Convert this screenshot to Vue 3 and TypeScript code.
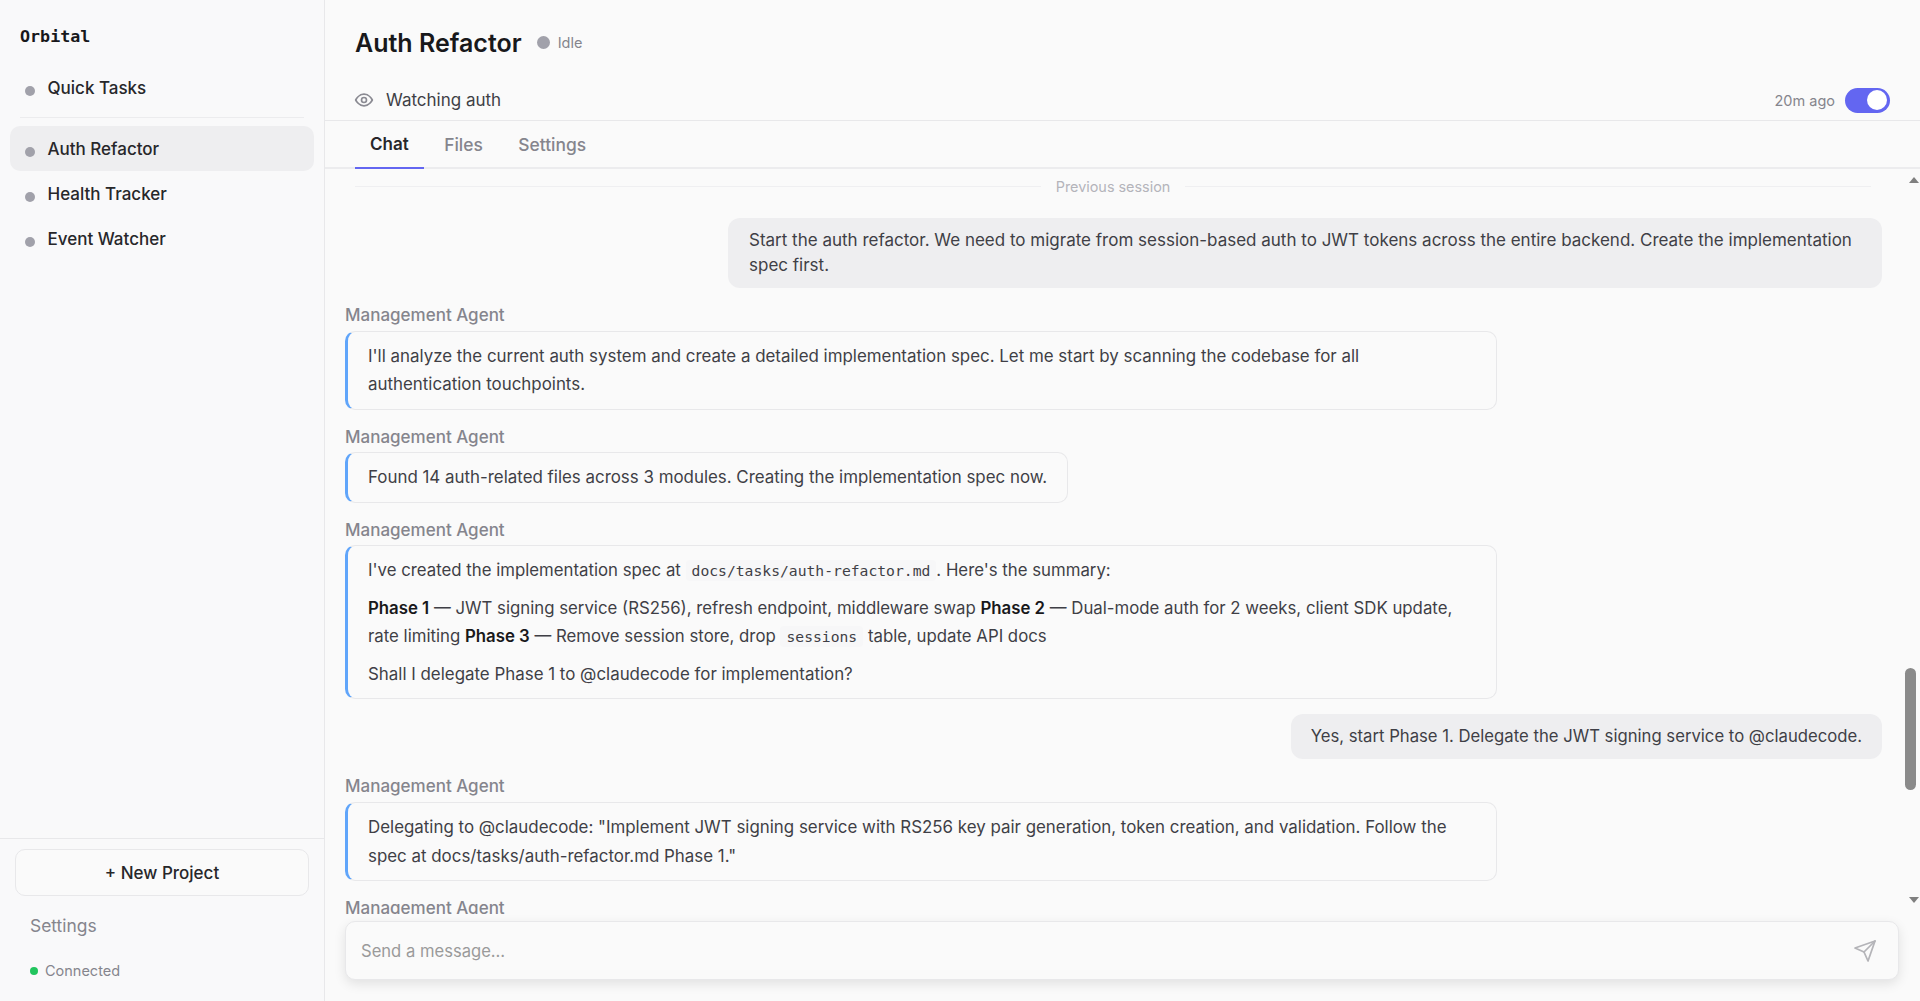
<script setup lang="ts">
interface Project { name: string; active?: boolean }
const projects: Project[] = [
  { name: 'Auth Refactor', active: true },
  { name: 'Health Tracker' },
  { name: 'Event Watcher' },
]
const tabs = ['Chat', 'Files', 'Settings']
</script>

<template>
  <div class="app">
    <aside class="sidebar">
      <div class="logo">Orbital</div>
      <div class="quick">
        <div class="item"><span class="dot"></span><span>Quick Tasks</span></div>
      </div>
      <div class="projects">
        <div v-for="p in projects" :key="p.name" class="item" :class="{ active: p.active }">
          <span class="dot"></span><span>{{ p.name }}</span>
        </div>
      </div>
      <div class="side-foot">
        <button class="new-btn">+ New Project</button>
        <div class="side-settings">Settings</div>
        <div class="conn"><span class="conn-dot"></span>Connected</div>
      </div>
    </aside>

    <main class="main">
      <header class="head">
        <div class="title-row">
          <h1>Auth Refactor</h1>
          <span class="status-dot"></span>
          <span class="status">Idle</span>
        </div>
        <div class="watch-row">
          <svg class="eye" viewBox="0 0 24 24" width="20" height="20" fill="none" stroke="#8a8a92" stroke-width="2" stroke-linecap="round" stroke-linejoin="round">
            <path d="M2 12s3.6-7 10-7 10 7 10 7-3.6 7-10 7-10-7-10-7z" />
            <circle cx="12" cy="12" r="3" />
          </svg>
          <span class="watch">Watching auth</span>
          <span class="ago">20m ago</span>
          <span class="toggle"><span class="knob"></span></span>
        </div>
      </header>

      <nav class="tabs">
        <div v-for="(t, i) in tabs" :key="t" class="tab" :class="{ on: i === 0 }">{{ t }}</div>
      </nav>

      <section class="chat">
        <div class="scroll">
          <div class="sep"><span>Previous session</span></div>

          <div class="user first"><div class="ubub">Start the auth refactor. We need to migrate from session-based auth to JWT tokens across the entire backend. Create the implementation spec first.</div></div>

          <div class="agent">
            <div class="who">Management Agent</div>
            <div class="abub">I'll analyze the current auth system and create a detailed implementation spec. Let me start by scanning the codebase for all authentication touchpoints.</div>
          </div>

          <div class="agent">
            <div class="who">Management Agent</div>
            <div class="abub">Found 14 auth-related files across 3 modules. Creating the implementation spec now.</div>
          </div>

          <div class="agent">
            <div class="who">Management Agent</div>
            <div class="abub">
              <p class="tight">I've created the implementation spec at <code>docs/tasks/auth-refactor.md</code>. Here's the summary:</p>
              <p class="tight"><strong>Phase 1</strong> — JWT signing service (RS256), refresh endpoint, middleware swap <strong>Phase 2</strong> — Dual-mode auth for 2 weeks, client SDK update, rate limiting <strong>Phase 3</strong> — Remove session store, drop <code>sessions</code> table, update API docs</p>
              <p>Shall I delegate Phase 1 to @claudecode for implementation?</p>
            </div>
          </div>

          <div class="user"><div class="ubub short">Yes, start Phase 1. Delegate the JWT signing service to @claudecode.</div></div>

          <div class="agent">
            <div class="who">Management Agent</div>
            <div class="abub">Delegating to @claudecode: "Implement JWT signing service with RS256 key pair generation, token creation, and validation. Follow the spec at docs/tasks/auth-refactor.md Phase 1."</div>
          </div>

          <div class="agent">
            <div class="who">Management Agent</div>
          </div>
        </div>

        <div class="bar">
          <span class="arrow up"></span>
          <span class="thumb"></span>
          <span class="arrow down"></span>
        </div>
      </section>

      <div class="composer-wrap">
        <div class="composer">
          <span class="ph">Send a message…</span>
          <svg viewBox="0 0 24 24" width="24" height="24" fill="none" stroke="#b4b4b8" stroke-width="1.75" stroke-linecap="round" stroke-linejoin="round">
            <path d="M22 2 15 22l-4-9-9-4z" />
            <path d="M22 2 11 13" />
          </svg>
        </div>
      </div>
    </main>
  </div>
</template>

<style>
html, body { margin: 0; background: #fafafa; }
</style>

<style scoped>
* { box-sizing: border-box; }
.app {
  display: flex;
  height: 1001px;
  overflow: hidden;
  font-family: Inter, "Noto Sans", sans-serif;
  color: #27272a;
  background: #fafafa;
  font-size: 16.9px;
}
.sidebar {
  width: 325px;
  flex: none;
  display: flex;
  flex-direction: column;
  background: #f9f9fa;
  border-right: 1px solid #e8e8ea;
  padding: 0 10px;
}
.logo {
  font-family: "DejaVu Sans Mono", monospace;
  font-weight: 700;
  font-size: 16.7px;
  color: #18181b;
  padding: 26px 10px 0;
  height: 65px;
}
.quick {
  padding-bottom: 7px;
  border-bottom: 1px solid #ececee;
  margin: 0 10px 8px;
}
.quick .item { margin: 0 -10px; }
.item {
  display: flex;
  align-items: center;
  gap: 12.5px;
  height: 45px;
  padding: 0 15px;
  border-radius: 10px;
  font-weight: 500;
  font-size: 17px;
  color: #27272a;
}
.item.active { background: #eeeef0; }
.dot {
  width: 10px;
  height: 10px;
  border-radius: 50%;
  background: #a1a1aa;
  margin-top: 6px;
}
.side-foot {
  margin: auto -10px 0;
  border-top: 1px solid #e8e8ea;
  padding: 10px 15px 21px;
}
.new-btn {
  display: block;
  width: 100%;
  height: 47px;
  border: 1px solid #e8e8ea;
  border-radius: 10px;
  background: #fafafa;
  font: 500 17px Inter, sans-serif;
  color: #27272a;
}
.side-settings {
  font-size: 17.4px;
  color: #85858d;
  padding: 20px 15px 0;
  line-height: 20px;
}
.conn {
  display: flex;
  align-items: center;
  gap: 7px;
  font-size: 14.5px;
  color: #85858d;
  padding: 26px 15px 0;
  line-height: 18px;
}
.conn-dot { width: 8px; height: 8px; border-radius: 50%; background: #22c55e; }

.main { flex: 1; min-width: 0; display: flex; flex-direction: column; }
.head { height: 121px; border-bottom: 1px solid #e8e8ea; padding: 0 30px 0 30px; }
.title-row { display: flex; align-items: center; height: 85px; }
h1 { margin: 0; font-size: 25px; font-weight: 600; color: #18181b; }
.status-dot { width: 13px; height: 13px; border-radius: 50%; background: #a1a1aa; margin-left: 15px; }
.status { margin-left: 8px; font-size: 14.5px; color: #85858d; }
.watch-row { display: flex; align-items: center; height: 30px; }
.eye { flex: none; margin-left: -1px; }
.watch { margin-left: 12px; font-size: 17px; color: #3f3f46; }
.ago { margin-left: auto; font-size: 14.5px; color: #85858d; }
.toggle {
  margin-left: 10px;
  width: 45px;
  height: 25px;
  border-radius: 13px;
  background: #6366f1;
  display: flex;
  align-items: center;
  justify-content: flex-end;
  padding: 3px;
}
.knob { width: 20px; height: 20px; border-radius: 50%; background: #fff; }

.tabs { height: 48px; display: flex; padding-left: 30px; gap: 5.5px; border-bottom: 2px solid #ececee; }
.tab { padding: 0 15px; line-height: 48px; height: 48px; font-size: 17.4px; font-weight: 500; color: #85858d; }
.tab.on { color: #27272a; font-weight: 600; font-size: 17px; line-height: 46px; border-bottom: 2px solid #6366f1; }

.chat { position: relative; height: 745px; flex: none; overflow: hidden; }
.scroll { height: 100%; overflow: hidden; padding: 7px 38px 0 20px; }
.sep { display: flex; align-items: center; gap: 15px; margin: 0 11px 0 10px; font-size: 14.4px; color: #b4b4ba; height: 20px; }
.sep::before, .sep::after { content: ""; flex: 1; height: 1px; background: #efeff1; }
.user { display: flex; justify-content: flex-end; margin: -2px 0 17px; }
.user.first { margin-top: 22px; }
.ubub {
  max-width: 1154px;
  padding: 10px 20px 10px 21px;
  background: #eeeef0;
  border-radius: 12px;
  font-size: 17px;
  line-height: 25px;
  color: #3f3f46;
}
.ubub.short { font-size: 16.7px; padding-left: 20px; }
.agent { margin-bottom: 17px; }
.who { font-size: 17px; font-weight: 500; color: #85858d; line-height: 20px; margin-bottom: 5.5px; }
.abub {
  display: table;
  max-width: 1152px;
  padding: 10px 20px;
  border: 1px solid #e8e8ea;
  border-left: 3px solid #60a5fa;
  border-radius: 10px;
  line-height: 28.56px;
  color: #3f3f46;
}
.abub p { margin: 0 0 8px; }
.abub p.tight { font-size: 16.8px; }
.abub p:last-child { margin: 0; }
code {
  font-family: "DejaVu Sans Mono", monospace;
  font-size: 14.7px;
  padding: 2px 6px;
  background: #f7f7f8;
  border-radius: 4px;
}
strong { font-weight: 600; color: #18181b; }

.bar { position: absolute; right: 0; top: 0; bottom: 0; width: 16px; background: #fafafa; }
.arrow { position: absolute; width: 0; height: 0; border-left: 5.5px solid transparent; border-right: 5.5px solid transparent; left: 5px; }
.arrow.up { top: 8px; border-bottom: 6px solid #7f7f7f; }
.arrow.down { bottom: 11px; border-top: 6px solid #7f7f7f; }
.thumb { position: absolute; left: 1px; width: 11px; top: 499px; height: 122px; border-radius: 6px; background: #8a8a8a; }

.composer-wrap { flex: 1; padding: 7px 21px 0 20px; }
.composer {
  display: flex;
  align-items: center;
  justify-content: space-between;
  height: 59px;
  padding: 0 21px 0 15px;
  border: 1px solid #e8e8ea;
  border-radius: 10px;
  background: #fafafa;
  box-shadow: 0 4px 12px rgba(0, 0, 0, 0.1);
}
.ph { font-size: 16.6px; color: #9a9a9a; }
</style>
